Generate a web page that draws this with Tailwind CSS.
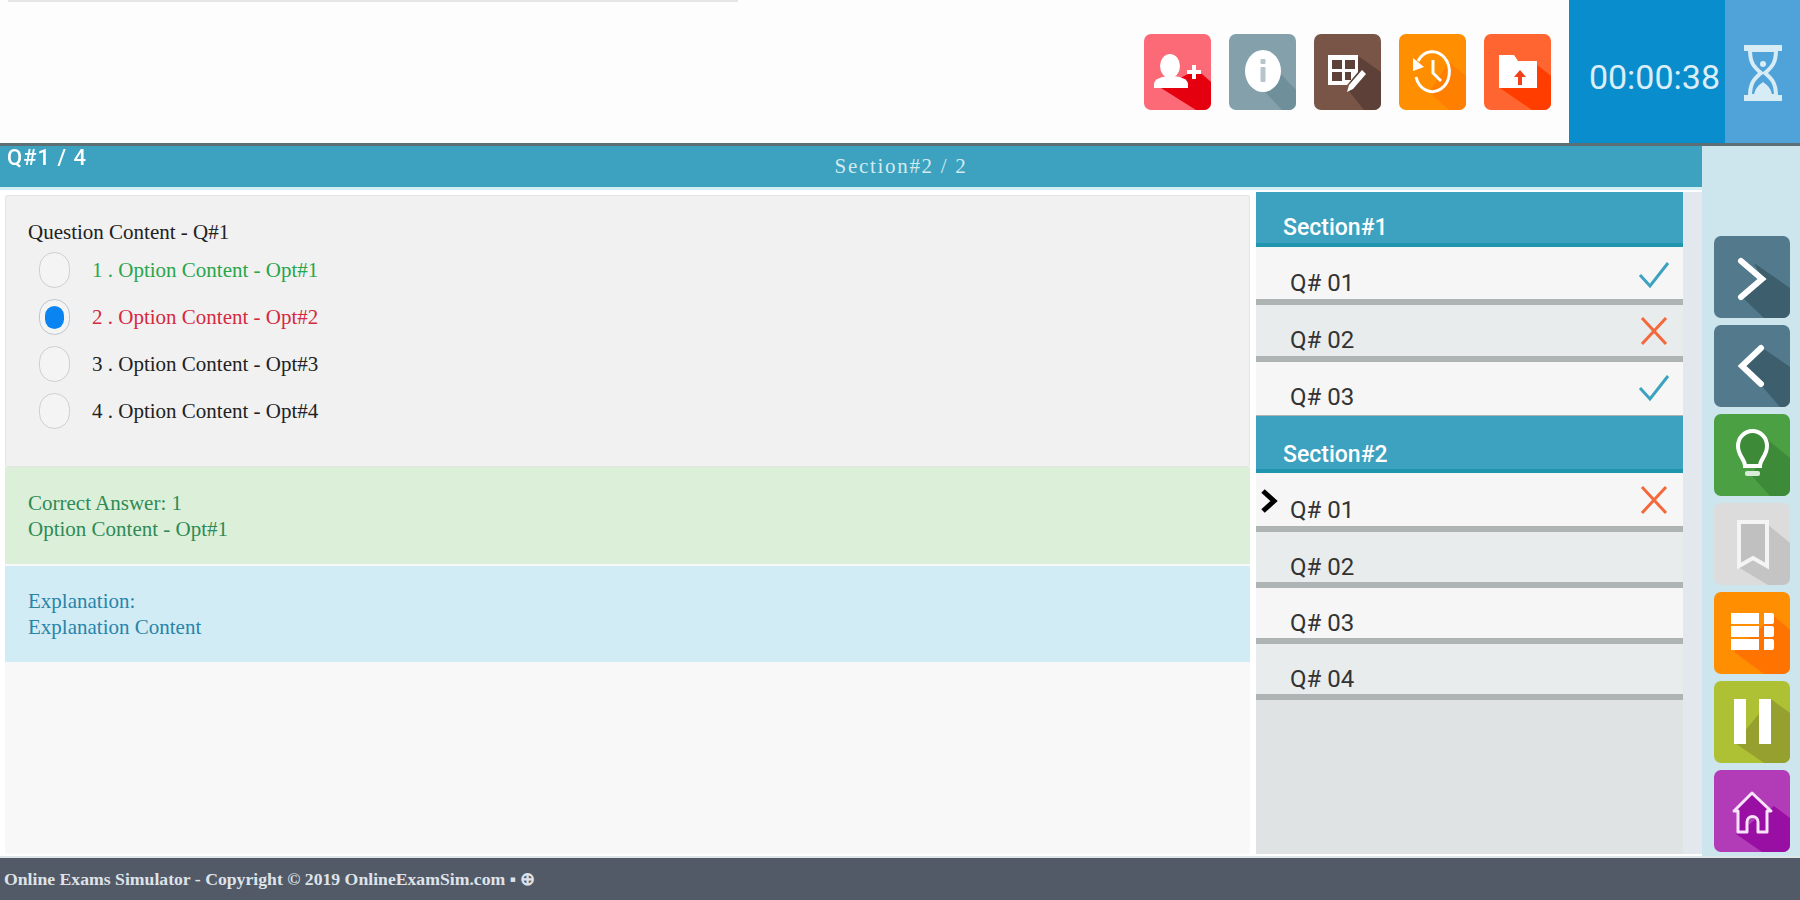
<!DOCTYPE html>
<html lang="en">
<head>
<meta charset="utf-8"/>
<title>Online Exams Simulator</title>
<script src="https://cdn.jsdelivr.net/npm/@tailwindcss/browser@4"></script>
</head>
<body class="bg-white font-['Roboto',sans-serif] overflow-hidden">
<div class="flex flex-col h-[900px] w-[1800px] blur-[0.5px]">

  <!-- top bar -->
  <header class="relative h-[146px] shrink-0 flex justify-end bg-[#fdfdfd] border-b-[3px] border-[#5b6f75]">
    <div class="absolute top-0 left-[8px] w-[730px] h-[2px] bg-[#e6e6e6]"></div>
    <div class="flex gap-[18px] pt-[34px] pr-[18px]">
      <button class="w-[67px] h-[76px] rounded-[7px] overflow-hidden bg-[#fb6a76]">
        <svg viewBox="0 0 67 76" class="w-full h-full">
          <polygon points="17,54 44,40 58,40 67,48 67,76 52,76" fill="#e5000f"/>
          <ellipse cx="26" cy="32" rx="10" ry="12" fill="#fff"/>
          <path d="M10 54v-4c0-5 8-8 17-8s17 3 17 8v4z" fill="#fff"/>
          <path d="M48 31h4v5h5v4h-5v5h-4v-5h-5v-4h5z" fill="#fff"/>
        </svg>
      </button>
      <button class="w-[67px] h-[76px] rounded-[7px] overflow-hidden bg-[#84a0aa]">
        <svg viewBox="0 0 67 76" class="w-full h-full">
          <polygon points="36,58 50,38 67,56 67,76 53,76" fill="#6f8f9b"/>
          <ellipse cx="34" cy="37" rx="18" ry="21" fill="#fff"/>
          <rect x="31.500" y="25" width="5" height="5" rx="1" fill="#b5c5cb"/>
          <rect x="31.500" y="33" width="5" height="15" rx="1" fill="#b5c5cb"/>
        </svg>
      </button>
      <button class="w-[67px] h-[76px] rounded-[7px] overflow-hidden bg-[#795548]">
        <svg viewBox="0 0 67 76" class="w-full h-full">
          <polygon points="34,56 44,22 67,38 67,76 50,76" fill="#5d4037"/>
          <path d="M14 21h30v17L33 51H14z" fill="#fff"/>
          <path d="M18 26h10v9H18zM31 26h10v9H31zM18 38h10v9H18zM31 38h6v8h-6z" fill="#5d4037"/>
          <path d="M33 58l2-7 13-15 4 4-13 15z" fill="#fff"/>
        </svg>
      </button>
      <button class="w-[67px] h-[76px] rounded-[7px] overflow-hidden bg-[#ff8f00]">
        <svg viewBox="0 0 67 76" class="w-full h-full">
          <polygon points="30,58 50,28 67,42 67,76 50,76" fill="#ff7f00"/>
          <path d="M19 27a17 20 0 1 1-2 16" fill="none" stroke="#fff" stroke-width="3"/>
          <polygon points="14,24 25,33 14,37" fill="#fff"/>
          <path d="M34 26v13l8 8" fill="none" stroke="#fff" stroke-width="3"/>
        </svg>
      </button>
      <button class="w-[67px] h-[76px] rounded-[7px] overflow-hidden bg-[#ff6530]">
        <svg viewBox="0 0 67 76" class="w-full h-full">
          <polygon points="16,54 52,30 67,42 67,76 48,76" fill="#ff3d00"/>
          <path d="M15 21h15l4 6h19v27H15z" fill="#fff"/>
          <path d="M36 36l6 7h-4v8h-4v-8h-4z" fill="#f1401a"/>
        </svg>
      </button>
    </div>
    <div class="w-[156px] h-[143px] bg-[#0a8dcc] text-[#dbeef7] text-[34px] flex items-center justify-end pr-[5px] pt-[12px]">00:00:38</div>
    <div class="w-[75px] h-[143px] bg-[#4fa3d8] flex items-center justify-center pt-[3px]">
      <svg viewBox="0 0 42 56" class="w-[42px] h-[56px]">
        <path d="M2 3h38M2 53h38" stroke="#d8ecf5" stroke-width="6"/>
        <path d="M8 5c0 13 4 17 11 23-7 6-11 10-11 23h26c0-13-4-17-11-23 7-6 11-10 11-23z" fill="none" stroke="#d8ecf5" stroke-width="4"/>
        <path d="M12 50c1-7 5-10 9-13 4 3 8 6 9 13z" fill="#d8ecf5"/>
        <circle cx="21" cy="19" r="3" fill="#d8ecf5"/>
      </svg>
    </div>
  </header>

  <div class="flex flex-1 min-h-0">
    <div class="w-[1702px] flex flex-col">
      <!-- question counter -->
      <div class="relative h-[44px] shrink-0 bg-[#3ca2bf] border-b-[3px] border-[#d4eef5] flex justify-center pt-[8px] pl-[100px]">
        <span class="absolute left-[7px] -top-[1px] text-white font-medium text-[22px] leading-[26px] tracking-[1px]">Q#1 / 4</span>
        <span class="font-['Liberation_Serif',serif] text-[#d3e9f0] text-[21px] leading-[24px] tracking-[1.7px]">Section#2 / 2</span>
      </div>

      <div class="flex flex-1 min-h-0 pt-[2px] pb-[2px] bg-white">
        <!-- question column -->
        <div class="w-[1245px] ml-[5px] mr-[6px] mt-[3px] flex flex-col font-['Liberation_Serif',serif] text-[21px] leading-[26px] bg-[#f8f8f8]">
          <div class="h-[272px] shrink-0 bg-[#f1f1f1] border border-[#e4e4e4] rounded-[3px] pt-[23px] pl-[22px] text-[#222]">
            <p>Question Content - Q#1</p>
            <div class="flex flex-col gap-[11px] pl-[11px] pt-[7px]">
              <label class="flex items-center gap-[22px] text-[#2aa64a]">
                <span class="w-[31px] h-[36px] rounded-full border border-[#cfcfcf] bg-[#f4f4f4]"></span>
                <span>1 . Option Content - Opt#1</span>
              </label>
              <label class="flex items-center gap-[22px] text-[#d5293f]">
                <span class="w-[31px] h-[36px] rounded-full border border-[#bcc6cf] bg-[#f4f4f4] flex items-center justify-center">
                  <span class="w-[19px] h-[23px] rounded-full bg-[#0a84f0]"></span>
                </span>
                <span>2 . Option Content - Opt#2</span>
              </label>
              <label class="flex items-center gap-[22px]">
                <span class="w-[31px] h-[36px] rounded-full border border-[#cfcfcf] bg-[#f4f4f4]"></span>
                <span>3 . Option Content - Opt#3</span>
              </label>
              <label class="flex items-center gap-[22px]">
                <span class="w-[31px] h-[36px] rounded-full border border-[#cfcfcf] bg-[#f4f4f4]"></span>
                <span>4 . Option Content - Opt#4</span>
              </label>
            </div>
          </div>
          <div class="h-[97px] shrink-0 bg-[#dcf0d9] text-[#2f8a56] pt-[23px] pl-[23px]">
            <p>Correct Answer: 1</p>
            <p>Option Content - Opt#1</p>
          </div>
          <div class="h-[96px] shrink-0 mt-[2px] bg-[#d2ecf6] text-[#2a84a8] pt-[22px] pl-[23px]">
            <p>Explanation:</p>
            <p>Explanation Content</p>
          </div>
        </div>

        <!-- question list -->
        <aside class="w-[427px] bg-[#dfe3e3] text-[#333] text-[24px]">
          <div class="h-[55px] bg-[#3ca2bf] border-b-[4px] border-[#1f95ae] text-white font-medium text-[23px] pl-[27px] pt-[22px] leading-[28px]">Section#1</div>
          <div class="relative h-[58px] bg-[#f6f6f6] border-b-[6px] border-[#aeb3b3] pl-[34px] pt-[22px] leading-[28px]">Q# 01
            <svg viewBox="0 0 32 28" class="absolute right-[13px] top-[14px] w-[32px] h-[28px]"><path d="M2 14l10 11L30 2" fill="none" stroke="#3ca2bf" stroke-width="3"/></svg>
          </div>
          <div class="relative h-[57px] bg-[#e9ecec] border-b-[6px] border-[#aeb3b3] pl-[34px] pt-[21px] leading-[28px]">Q# 02
            <svg viewBox="0 0 28 30" class="absolute right-[15px] top-[11px] w-[28px] h-[30px]"><path d="M2 2l24 26M26 2L2 28" fill="none" stroke="#f4693b" stroke-width="3"/></svg>
          </div>
          <div class="relative h-[54px] bg-[#f6f6f6] border-b-[1px] border-[#aeb3b3] pl-[34px] pt-[21px] leading-[28px]">Q# 03
            <svg viewBox="0 0 32 28" class="absolute right-[13px] top-[12px] w-[32px] h-[28px]"><path d="M2 14l10 11L30 2" fill="none" stroke="#3ca2bf" stroke-width="3"/></svg>
          </div>
          <div class="h-[57px] bg-[#3ca2bf] border-b-[4px] border-[#1f95ae] text-white font-medium text-[23px] pl-[27px] pt-[25px] leading-[28px]">Section#2</div>
          <div class="relative h-[59px] bg-[#f6f6f6] border-b-[6px] border-[#aeb3b3] pl-[34px] pt-[23px] leading-[28px]">Q# 01
            <svg viewBox="0 0 18 26" class="absolute left-[4px] top-[15px] w-[18px] h-[26px]"><path d="M3 3l11 10L3 23" fill="none" stroke="#000" stroke-width="5"/></svg>
            <svg viewBox="0 0 28 30" class="absolute right-[15px] top-[12px] w-[28px] h-[30px]"><path d="M2 2l24 26M26 2L2 28" fill="none" stroke="#f4693b" stroke-width="3"/></svg>
          </div>
          <div class="h-[56px] bg-[#e9ecec] border-b-[6px] border-[#aeb3b3] pl-[34px] pt-[21px] leading-[28px]">Q# 02</div>
          <div class="h-[56px] bg-[#f6f6f6] border-b-[6px] border-[#aeb3b3] pl-[34px] pt-[21px] leading-[28px]">Q# 03</div>
          <div class="h-[56px] bg-[#e9ecec] border-b-[6px] border-[#aeb3b3] pl-[34px] pt-[21px] leading-[28px]">Q# 04</div>
        </aside>
        <div class="flex-1 bg-[#e3e8ee]"></div>
      </div>
    </div>

    <!-- side actions -->
    <nav class="flex-1 bg-[#cde5ec] flex flex-col gap-[7px] pt-[90px] pl-[12px]">
      <button class="w-[76px] h-[82px] rounded-[7px] overflow-hidden bg-[#527a8c]">
        <svg viewBox="0 0 76 82" class="w-full h-full">
          <polygon points="27,60 48,42 40,27 76,52 76,82 50,82" fill="#3d5e6c"/>
          <path d="M27 25l21 18-21 18" fill="none" stroke="#fff" stroke-width="6" stroke-linecap="round"/>
        </svg>
      </button>
      <button class="w-[76px] h-[82px] rounded-[7px] overflow-hidden bg-[#527a8c]">
        <svg viewBox="0 0 76 82" class="w-full h-full">
          <polygon points="47,60 30,42 47,22 76,42 76,82 66,82" fill="#3d5e6c"/>
          <path d="M47 23L28 41l19 18" fill="none" stroke="#fff" stroke-width="6" stroke-linecap="round"/>
        </svg>
      </button>
      <button class="w-[76px] h-[82px] rounded-[7px] overflow-hidden bg-[#4ba044]">
        <svg viewBox="0 0 76 82" class="w-full h-full">
          <polygon points="38,62 54,26 76,44 76,82 56,82" fill="#3d8a38"/>
          <path d="M31 52c0-7-7-10-7-20a14.500 15 0 0 1 29 0c0 10-7 13-7 20z" fill="#3d8a38" stroke="#fff" stroke-width="4"/>
          <rect x="31" y="57" width="15" height="5" rx="2" fill="#d9ecd7"/>
        </svg>
      </button>
      <button class="w-[76px] h-[82px] rounded-[7px] overflow-hidden bg-[#dcdcdc]">
        <svg viewBox="0 0 76 82" class="w-full h-full">
          <polygon points="24,64 52,20 76,40 76,82 54,82" fill="#c4c4c4"/>
          <path d="M25 19h28v44l-14-8-14 8z" fill="#c0c0c0" stroke="#f4f4f4" stroke-width="4"/>
        </svg>
      </button>
      <button class="w-[76px] h-[82px] rounded-[7px] overflow-hidden bg-[#ff8f00]">
        <svg viewBox="0 0 76 82" class="w-full h-full">
          <polygon points="20,60 60,24 76,38 76,82 50,82" fill="#ff7300"/>
          <path d="M17 21h28v11H17zM17 34h28v11H17zM17 47h28v11H17z" fill="#fff"/>
          <path d="M50 21h8a2 2 0 0 1 2 2v7a2 2 0 0 1-2 2h-8zM50 34h8a2 2 0 0 1 2 2v7a2 2 0 0 1-2 2h-8zM50 47h8a2 2 0 0 1 2 2v7a2 2 0 0 1-2 2h-8z" fill="#fff"/>
        </svg>
      </button>
      <button class="w-[76px] h-[82px] rounded-[7px] overflow-hidden bg-[#aec034]">
        <svg viewBox="0 0 76 82" class="w-full h-full">
          <polygon points="21,62 57,18 76,32 76,82 50,82" fill="#95a02f"/>
          <path d="M20 18h12v45H20zM45 18h12v45H45z" fill="#fff"/>
        </svg>
      </button>
      <button class="w-[76px] h-[82px] rounded-[7px] overflow-hidden bg-[#b23cb8]">
        <svg viewBox="0 0 76 82" class="w-full h-full">
          <polygon points="22,64 60,36 76,48 76,82 48,82" fill="#9a0fa3"/>
          <path d="M20 41L38 23l19 18h-4v21H44V52a5 5 0 0 0-11 0v10H24V41z" fill="#9a0fa3" stroke="#f7e4f8" stroke-width="3" stroke-linejoin="round"/>
        </svg>
      </button>
    </nav>
  </div>

  <footer class="h-[44px] shrink-0 bg-[#525a68] border-t-[2px] border-[#dfe6e8] flex items-center pl-[4px] font-['Liberation_Serif',serif] font-bold text-[#dfe3e8] text-[17.700px]">
    Online Exams Simulator - Copyright © 2019 OnlineExamSim.com ▪ ⊕
  </footer>
</div>
</body>
</html>
